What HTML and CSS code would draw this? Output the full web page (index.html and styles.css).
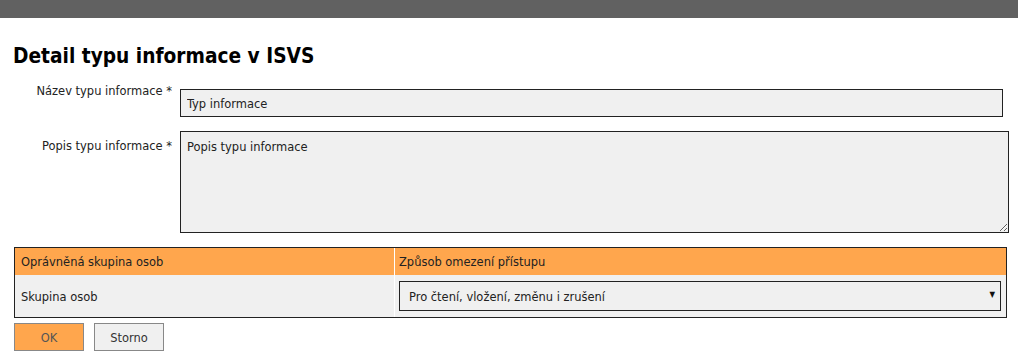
FILE: index.html
```html
<!DOCTYPE html>
<html lang="cs">
<head>
    <meta charset="UTF-8">
    <meta name="viewport" content="width=device-width, initial-scale=1.0">
    <title>Detail typu informace v ISVS</title>
    <link rel="stylesheet" href="styles.css">
</head>
<body>
    <div class="topbar"></div>

    <div class="page">
        <h1>Detail typu informace v ISVS</h1>

        <form id="detailForm">
            <div class="form-row">
                <label for="nazev" class="label-top">Název typu informace *</label>
                <input type="text" id="nazev" class="field-input" value="Typ informace">
            </div>

            <div class="form-row row-textarea">
                <label for="popis" class="label-area">Popis typu informace *</label>
                <textarea id="popis" class="field-area">Popis typu informace</textarea>
            </div>

            <table class="rights">
                <thead>
                    <tr>
                        <th class="col-group">Oprávněná skupina osob</th>
                        <th class="col-access">Způsob omezení přístupu</th>
                    </tr>
                </thead>
                <tbody>
                    <tr>
                        <td class="col-group">Skupina osob</td>
                        <td class="col-access">
                            <div class="select-wrap">
                                <select class="access-select">
                                    <option>Pro čtení, vložení, změnu i zrušení</option>
                                    <option>Pouze pro čtení</option>
                                </select>
                                <span class="select-arrow">&#9660;</span>
                            </div>
                        </td>
                    </tr>
                </tbody>
            </table>

            <div class="buttons">
                <button type="submit" class="btn btn-ok">OK</button>
                <button type="button" class="btn btn-cancel">Storno</button>
            </div>
        </form>
    </div>
</body>
</html>
```

FILE: styles.css
```css
body {
    margin: 0;
    font-family: "DejaVu Sans Condensed", "DejaVu Sans", sans-serif;
    font-size: 12.75px;
    color: #222;
    background: #fff;
}
.topbar {
    height: 18px;
    background: #616161;
}
.page {
    padding: 0 12px 0 14px;
}
h1 {
    margin: 26px 0 14px -1px;
    font-size: 20.7px;
    line-height: 24px;
    font-weight: bold;
    color: #000;
}
.form-row {
    display: grid;
    grid-template-columns: 158px auto;
    column-gap: 8px;
    align-items: start;
}
.form-row label {
    text-align: right;
    line-height: 15px;
}
.label-top {
    padding-top: 1px;
}
.label-area {
    padding-top: 7px;
}
.row-textarea {
    margin-top: 14px;
}
.field-input,
.field-area {
    box-sizing: border-box;
    font-family: inherit;
    font-size: 12.75px;
    color: #222;
    background: #f0f0f0;
    border: 1px solid #222;
    border-radius: 0;
    padding: 0 6px;
    outline: none;
}
.field-input {
    width: 823px;
    height: 28px;
    margin-top: 7px;
}
.field-area {
    width: 829px;
    height: 102px;
    padding-top: 7px;
    line-height: 15px;
    resize: both;
}
.rights {
    width: 993px;
    margin-top: 14px;
    border: 1px solid #222;
    border-collapse: separate;
    border-spacing: 0;
}
.rights th,
.rights td {
    text-align: left;
    font-weight: normal;
    padding: 0 6px;
}
.rights th {
    background: #ffa64d;
    height: 27px;
    color: #222;
}
.rights td {
    background: #f0f0f0;
    height: 30px;
    padding-top: 6px;
    padding-bottom: 6px;
}
.col-group {
    width: 367px;
}
.col-access {
    border-left: 1px solid #fff;
    padding-left: 4px !important;
    padding-right: 4px !important;
}
.select-wrap {
    position: relative;
}
.access-select {
    appearance: none;
    -webkit-appearance: none;
    box-sizing: border-box;
    width: 602px;
    height: 30px;
    padding: 0 9px;
    font-family: inherit;
    font-size: 12.75px;
    color: #222;
    background: #f0f0f0;
    border: 1px solid #222;
    border-radius: 0;
}
.select-arrow {
    position: absolute;
    right: 7px;
    top: 9px;
    font-size: 8px;
    color: #111;
    pointer-events: none;
}
.buttons {
    display: flex;
    gap: 10px;
    margin-top: 5px;
}
.btn {
    width: 70px;
    height: 28px;
    font-family: inherit;
    font-size: 12.75px;
    border: 1px solid #888;
    border-radius: 0;
    cursor: pointer;
}
.btn-ok {
    background: #ffa64d;
    color: #555;
}
.btn-cancel {
    background: #f0f0f0;
    color: #333;
}
```
